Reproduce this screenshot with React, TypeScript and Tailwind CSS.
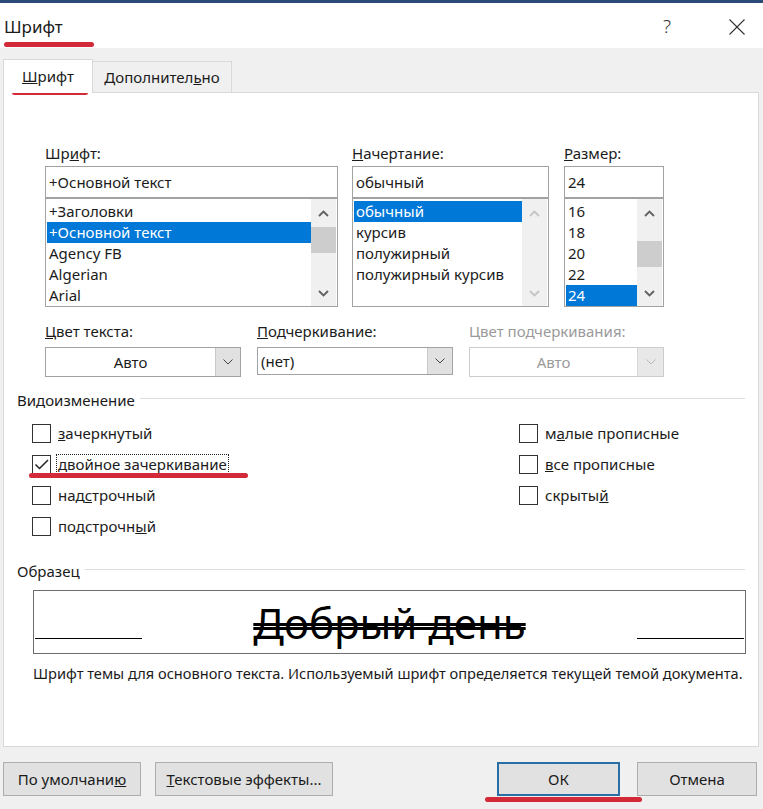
import React from "react";

const RED = "bg-[#d22a38]";

function Chevron({ up = false, color = "#606060" }: { up?: boolean; color?: string }) {
  return (
    <svg width="11" height="7" viewBox="0 0 11 7">
      <polyline
        points={up ? "1,6 5.5,1.5 10,6" : "1,1 5.5,5.5 10,1"}
        fill="none"
        stroke={color}
        strokeWidth="1.8"
      />
    </svg>
  );
}

function DropChevron({ color = "#444" }: { color?: string }) {
  return (
    <svg width="10" height="6" viewBox="0 0 10 6">
      <polyline points="0.5,0.5 5,5 9.5,0.5" fill="none" stroke={color} strokeWidth="1" />
    </svg>
  );
}

function ListBox({
  items,
  selected,
  thumbTop,
  disabled = false,
}: {
  items: string[];
  selected: number;
  thumbTop: number | null;
  disabled?: boolean;
}) {
  const arrow = disabled ? "#c4c4c4" : "#606060";
  return (
    <div className="h-[109px] border border-[#a2a2a2] flex pl-[1px] pr-[1px]">
      <div className="flex-1 pt-[2px]">
        {items.map((it, i) => (
          <div
            key={it}
            className={
              "h-[21px] leading-[21px] px-[2px] " +
              (i === selected ? "bg-[#0078d7] text-white" : "")
            }
          >
            {it}
          </div>
        ))}
      </div>
      <div className="w-[25px] bg-[#f0f0f0] flex flex-col">
        <div className="h-[28px] flex items-center justify-center">
          <Chevron up color={arrow} />
        </div>
        <div className="flex-1">
          {thumbTop !== null && (
            <div className="h-[26px] bg-[#cdcdcd]" style={{ marginTop: thumbTop }} />
          )}
        </div>
        <div className="h-[26px] flex items-center justify-center">
          <Chevron color={arrow} />
        </div>
      </div>
    </div>
  );
}

function Check({ checked = false }: { checked?: boolean }) {
  return (
    <div className="w-[19px] h-[19px] border border-[#333] bg-white shrink-0 flex items-center justify-center">
      {checked && (
        <svg width="17" height="17" viewBox="0 0 17 17">
          <polyline points="2.5,8.5 6.5,12.5 15,4" fill="none" stroke="#222" strokeWidth="1.5" />
        </svg>
      )}
    </div>
  );
}

function CheckRow({ children, checked = false, focus = false }: { children: React.ReactNode; checked?: boolean; focus?: boolean }) {
  return (
    <div className="h-[20px] flex items-center">
      <Check checked={checked} />
      <div
        className={
          "ml-[5px] px-[1px] h-[20px] leading-[18px] border " +
          (focus ? "border-dotted border-[#222]" : "border-transparent")
        }
      >
        {children}
      </div>
    </div>
  );
}

export default function App() {
  return (
    <div className="w-[763px] h-[809px] bg-[#f0f0f0] relative overflow-hidden font-['Noto_Sans',sans-serif] text-[15px] text-[#1b1b1b]">
      <div className="h-[3px] bg-[#2c4a78]" />

      {/* title bar */}
      <div className="h-[45px] bg-white flex items-center justify-between pl-[4px] pr-[18px] pt-[2px]">
        <div className="text-[17px] leading-none">Шрифт</div>
        <div className="flex items-center">
          <span className="text-[19px] font-light text-[#333] leading-none mr-[58px]">?</span>
          <svg width="16" height="16" viewBox="0 0 16 16">
            <line x1="0.5" y1="0.5" x2="15.5" y2="15.5" stroke="#333" strokeWidth="1.1" />
            <line x1="15.5" y1="0.5" x2="0.5" y2="15.5" stroke="#333" strokeWidth="1.1" />
          </svg>
        </div>
      </div>

      {/* tabs */}
      <div className="h-[44px] flex items-end pl-[3px]">
        <div className="w-[90px] h-[34px] bg-white border border-b-0 border-[#d9d9d9] relative z-10 mb-[-1px] flex items-center justify-center">
          <span>
            <u>Ш</u>рифт
          </span>
        </div>
        <div className="w-[139px] h-[31px] bg-[#f0f0f0] border-t border-r border-[#d9d9d9] flex items-center justify-center">
          <span>
            Дополнител<u>ь</u>но
          </span>
        </div>
      </div>

      {/* panel */}
      <div className="ml-[3px] w-[756px] h-[655px] bg-white border border-[#d9d9d9]">
        <div className="pl-[41px] pt-[50px] flex">
          <div className="w-[293px]">
            <div className="h-[20px] leading-[20px] mb-[3px]">
              Шр<u>и</u>фт:
            </div>
            <div className="h-[32px] border border-[#a2a2a2] pl-[3px] flex items-center">+Основной текст</div>
            <ListBox
              items={["+Заголовки", "+Основной текст", "Agency FB", "Algerian", "Arial"]}
              selected={1}
              thumbTop={0}
            />
          </div>
          <div className="w-[197px] ml-[14px]">
            <div className="h-[20px] leading-[20px] mb-[3px]">
              <u>Н</u>ачертание:
            </div>
            <div className="h-[32px] border border-[#a2a2a2] pl-[3px] flex items-center">обычный</div>
            <ListBox
              items={["обычный", "курсив", "полужирный", "полужирный курсив"]}
              selected={0}
              thumbTop={null}
              disabled
            />
          </div>
          <div className="w-[100px] ml-[15px]">
            <div className="h-[20px] leading-[20px] mb-[3px]">
              <u>Р</u>азмер:
            </div>
            <div className="h-[32px] border border-[#a2a2a2] pl-[3px] flex items-center">24</div>
            <ListBox items={["16", "18", "20", "22", "24"]} selected={4} thumbTop={14} />
          </div>
        </div>

        {/* row 2 */}
        <div className="pl-[41px] mt-[14px] flex">
          <div className="w-[196px]">
            <div className="h-[20px] leading-[20px] mb-[6px]">
              <u>Ц</u>вет текста:
            </div>
            <div className="h-[30px] border border-[#a2a2a2] flex">
              <div className="flex-1 flex items-center justify-center">Авто</div>
              <div className="w-[25px] bg-[#e1e1e1] border-l border-[#c8c8c8] flex items-center justify-center">
                <DropChevron />
              </div>
            </div>
          </div>
          <div className="w-[196px] ml-[16px]">
            <div className="h-[20px] leading-[20px] mb-[6px]">
              <u>П</u>одчеркивание:
            </div>
            <div className="h-[28px] border border-[#a2a2a2] flex">
              <div className="flex-1 flex items-center pl-[3px]">(нет)</div>
              <div className="w-[25px] bg-[#e1e1e1] border-l border-[#c8c8c8] flex items-center justify-center">
                <DropChevron />
              </div>
            </div>
          </div>
          <div className="w-[195px] ml-[16px]">
            <div className="h-[20px] leading-[20px] mb-[6px] text-[#9a9a9a]">Цвет подчеркивания:</div>
            <div className="h-[30px] border border-[#cccccc] flex text-[#9a9a9a]">
              <div className="flex-1 flex items-center justify-center">Авто</div>
              <div className="w-[26px] bg-[#e8e8e8] border-l border-[#d6d6d6] flex items-center justify-center">
                <DropChevron color="#b8b8b8" />
              </div>
            </div>
          </div>
        </div>

        {/* Видоизменение */}
        <div className="mt-[13px] pl-[13px] pr-[13px] flex items-center h-[20px]">
          <span className="leading-[20px]">Видоизменение</span>
          <div className="flex-1 h-px bg-[#dcdcdc] ml-[5px] mt-[-3px]" />
        </div>
        <div className="mt-[13px] pl-[28px] flex">
          <div className="w-[487px] flex flex-col gap-[11px]">
            <CheckRow>
              <u>з</u>ачеркнутый
            </CheckRow>
            <CheckRow checked focus>
              <u>д</u>войное зачеркивание
            </CheckRow>
            <CheckRow>
              над<u>с</u>трочный
            </CheckRow>
            <CheckRow>
              подстрочн<u>ы</u>й
            </CheckRow>
          </div>
          <div className="flex flex-col gap-[11px]">
            <CheckRow>
              м<u>а</u>лые прописные
            </CheckRow>
            <CheckRow>
              <u>в</u>се прописные
            </CheckRow>
            <CheckRow>
              скрыты<u>й</u>
            </CheckRow>
          </div>
        </div>

        {/* Образец */}
        <div className="mt-[25px] pl-[13px] pr-[13px] flex items-center h-[20px]">
          <span className="leading-[20px]">Образец</span>
          <div className="flex-1 h-px bg-[#dcdcdc] ml-[5px] mt-[-3px]" />
        </div>
        <div className="mt-[9px] ml-[29px] w-[713px] h-[64px] border border-[#6d6d6d] pt-[11px] px-[1px] flex items-baseline">
          <div className="w-[107px] h-[1.5px] bg-black" />
          <div className="flex-1 text-center text-[42px] leading-none text-black font-['Noto_Sans',sans-serif] line-through decoration-double decoration-[2.5px]">
            Добрый день
          </div>
          <div className="w-[107px] h-[1.5px] bg-black" />
        </div>
        <div className="mt-[9px] ml-[29px] h-[20px] leading-[20px] whitespace-nowrap text-[14.6px]">
          Шрифт темы для основного текста. Используемый шрифт определяется текущей темой документа.
        </div>
      </div>

      {/* buttons */}
      <div className="mt-[15px] px-[3px] pr-[6px] flex">
        <button className="w-[138px] h-[34px] bg-[#e1e1e1] border border-[#adadad]">
          По умолчани<u>ю</u>
        </button>
        <button className="w-[178px] h-[34px] ml-[14px] bg-[#e1e1e1] border border-[#adadad]">
          <u>Т</u>екстовые эффекты...
        </button>
        <div className="flex-1" />
        <button className="w-[123px] h-[34px] bg-[#e1e1e1] border-2 border-[#2a6ea6]">ОК</button>
        <button className="w-[120px] h-[34px] ml-[17px] bg-[#e1e1e1] border border-[#adadad]">Отмена</button>
      </div>

      {/* red annotation marks */}
      <div className={"absolute left-[4px] top-[42px] w-[90px] h-[5px] rounded-full " + RED} />
      <div className={"absolute left-[12px] top-[90px] w-[76px] h-[5px] rounded-full " + RED} />
      <div className={"absolute left-[29px] top-[473px] w-[219px] h-[5px] rounded-full " + RED} />
      <div className={"absolute left-[485px] top-[797px] w-[157px] h-[5px] rounded-full " + RED} />
    </div>
  );
}
